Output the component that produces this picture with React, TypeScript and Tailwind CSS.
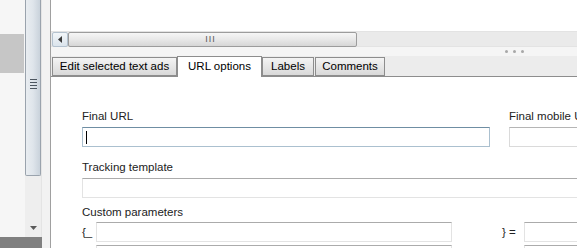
import React from 'react';

const font = { fontFamily: '"Liberation Sans", Arial, sans-serif' };

function Tab({ label, width, active }: { label: string; width: string; active?: boolean }) {
  if (active) {
    return (
      <div className={`relative z-10 -mb-px flex h-[21px] items-center justify-center self-end border border-b-0 border-[#8d8d8d] bg-white text-[11.5px] text-black ${width}`}>
        {label}
      </div>
    );
  }
  return (
    <div className={`flex h-[19px] items-center justify-center self-end border border-[#8d8d8d] bg-gradient-to-b from-[#f4f4f4] to-[#d9d9d9] text-[11.5px] text-black ${width}`}>
      {label}
    </div>
  );
}

export default function App() {
  return (
    <div className="flex h-[248px] w-[577px] overflow-hidden bg-[#f0f0f0]" style={font}>
      {/* left pane with vertical scrollbar */}
      <div className="flex w-[42px] shrink-0 flex-col">
        <div className="flex flex-1">
          <div className="flex w-[25px] flex-col bg-[#f6f6f6]">
            <div className="mt-[34px] h-[39px] w-[24px] bg-[#c6c6c6]" />
          </div>
          <div className="flex w-[17px] flex-col border-r border-[#e4e4e4] bg-[#eeeeee]">
            <div className="flex h-[176px] w-[16px] shrink-0 items-center justify-center rounded-b-[2px] border border-t-0 border-[#9aa3ad] bg-gradient-to-r from-[#e9edf1] via-[#dfe5eb] to-[#c9d2db]">
              <div className="mt-[-8px] flex flex-col gap-[2px]">
                <div className="h-px w-[7px] bg-[#4c5660]" />
                <div className="h-px w-[7px] bg-[#4c5660]" />
                <div className="h-px w-[7px] bg-[#4c5660]" />
                <div className="h-px w-[7px] bg-[#4c5660]" />
              </div>
            </div>
            <div className="flex-1" />
            <div className="mb-[2px] flex h-[15px] w-[16px] shrink-0 items-center justify-center">
              <svg width="7" height="4" viewBox="0 0 7 4">
                <path d="M0 0 L7 0 L3.5 4 Z" fill="#5a5a5a" />
              </svg>
            </div>
          </div>
        </div>
        <div className="h-[11px] shrink-0 bg-[#808080]" />
      </div>

      <div className="w-[8px] shrink-0 bg-[#f2f2f2]" />

      {/* right pane */}
      <div className="flex min-w-0 flex-1 flex-col overflow-hidden border-l border-[#a0a0a0]">
        <div className="h-[31px] shrink-0 bg-white" />
        {/* horizontal scrollbar */}
        <div className="flex h-[16px] shrink-0 items-center border-y border-[#e3e3e3] bg-[#eaeaea] pl-px">
          <div className="flex h-[15px] w-[16px] items-center justify-center rounded-[2px] border border-[#b4c2cf] bg-gradient-to-b from-[#f2f6f9] to-[#dbe4ec]">
            <svg width="4" height="7" viewBox="0 0 4 7">
              <path d="M4 0 L4 7 L0 3.5 Z" fill="#3c3c3c" />
            </svg>
          </div>
          <div className="flex h-[15px] w-[289px] items-center justify-center rounded-[2px] border border-[#9c9c9c] bg-gradient-to-b from-[#f6f6f6] via-[#e8e8e8] to-[#d6d6d6]">
            <span className="ml-[-4px] text-[9px] leading-none tracking-[1px] text-[#555]">III</span>
          </div>
        </div>
        <div className="flex h-[9px] shrink-0 items-center justify-end bg-[#f5f5f5] pr-[53px]">
          <div className="flex gap-[5px]">
            <div className="h-[3px] w-[3px] rounded-full bg-[#a8a8a8]" />
            <div className="h-[3px] w-[3px] rounded-full bg-[#a8a8a8]" />
            <div className="h-[3px] w-[3px] rounded-full bg-[#a8a8a8]" />
          </div>
        </div>
        {/* tabs */}
        <div className="flex h-[21px] shrink-0 items-end border-b border-[#8d8d8d] bg-[#ececec] pl-px">
          <Tab label="Edit selected text ads" width="w-[125px]" />
          <Tab label="URL options" width="w-[85px]" active />
          <Tab label="Labels" width="w-[52px]" />
          <div className="w-px" />
          <Tab label="Comments" width="w-[70px]" />
        </div>

        {/* tab content */}
        <div className="flex-1 bg-white pl-[31px] pt-[32px] text-[11.5px] leading-[14px] text-[#222]">
          <div className="flex gap-[19px]">
            <div className="w-[408px] shrink-0">
              <div className="mb-[4px]">Final URL</div>
              <div className="flex h-[20px] items-center border border-[#abc0cf] border-t-[#6f8ea3] bg-white pl-[3px]">
                <div className="h-[13px] w-px bg-black" />
              </div>
            </div>
            <div className="w-[120px] shrink-0">
              <div className="mb-[4px] whitespace-nowrap">Final mobile URL</div>
              <div className="h-[20px] border border-[#dadada] border-t-[#b5b5b5] bg-white" />
            </div>
          </div>

          <div className="mt-[13px]">
            <div className="mb-[4px]">Tracking template</div>
            <div className="h-[20px] w-[520px] border border-[#e3e3e3] border-t-[#ababab] bg-white" />
          </div>

          <div className="mt-[7px]">
            <div className="mb-[3px]">Custom parameters</div>
            <div className="flex items-center">
              <span className="w-[14px] shrink-0">{'{_'}</span>
              <div className="h-[20px] w-[356px] shrink-0 border border-[#e3e3e3] border-t-[#ababab] bg-white" />
              <span className="ml-[50px] w-[22px] shrink-0 whitespace-nowrap">{'} ='}</span>
              <div className="h-[20px] w-[80px] shrink-0 border border-[#e3e3e3] border-t-[#ababab] bg-white" />
            </div>
            <div className="mt-[3px] flex">
              <div className="ml-[14px] h-[20px] w-[356px] shrink-0 border border-[#e3e3e3] border-t-[#ababab] bg-white" />
              <div className="ml-[72px] h-[20px] w-[80px] shrink-0 border border-[#e3e3e3] border-t-[#ababab] bg-white" />
            </div>
          </div>
        </div>
      </div>
    </div>
  );
}
